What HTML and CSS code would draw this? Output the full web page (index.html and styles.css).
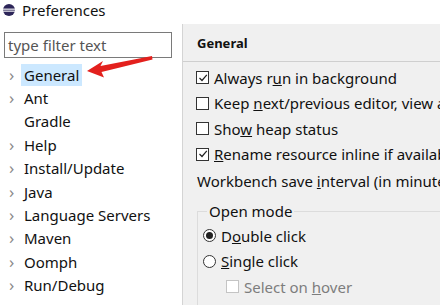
FILE: index.html
```html
<!DOCTYPE html>
<html lang="en">
<head>
  <meta charset="UTF-8" />
  <title>Preferences</title>
  <link rel="stylesheet" href="styles.css">
</head>
<body>
  <div class="titlebar">
    <svg class="logo" width="14" height="14" viewBox="0 0 14 14">
      <circle cx="7" cy="7" r="6" fill="#2c2558"/>
      <rect x="1" y="5.6" width="12" height="1.1" fill="#fff"/>
      <rect x="1" y="7.6" width="12" height="1.1" fill="#fff"/>
    </svg>
    <span class="title">Preferences</span>
  </div>

  <div class="main">
    <div class="sidebar">
      <div class="filter">type filter text</div>
      <div class="tree">
        <div class="node"><span class="chev">›</span><span class="label selected">General</span></div>
        <div class="node"><span class="chev">›</span><span class="label">Ant</span></div>
        <div class="node"><span class="chev"></span><span class="label">Gradle</span></div>
        <div class="node"><span class="chev">›</span><span class="label">Help</span></div>
        <div class="node"><span class="chev">›</span><span class="label">Install/Update</span></div>
        <div class="node"><span class="chev">›</span><span class="label">Java</span></div>
        <div class="node"><span class="chev">›</span><span class="label">Language Servers</span></div>
        <div class="node"><span class="chev">›</span><span class="label">Maven</span></div>
        <div class="node"><span class="chev">›</span><span class="label">Oomph</span></div>
        <div class="node"><span class="chev">›</span><span class="label">Run/Debug</span></div>
        <div class="node"><span class="chev">›</span><span class="label">Team</span></div>
      </div>
      <svg class="arrow" width="80" height="30" viewBox="80 52 80 30">
        <polygon points="87,71 103,61 100.5,66 152,56 152.5,59.5 101.5,72 104,77.5" fill="#e3201d"/>
      </svg>
    </div>

    <div class="content">
      <div class="page-head">General</div>
      <div class="page-body">
        <div class="opt"><span class="box"><svg width="10" height="10" viewBox="0 0 10 10"><path d="M1.5 5 L4 7.5 L8.8 1.8" fill="none" stroke="#222" stroke-width="1.2"/></svg></span><span>Always r<u>u</u>n in background</span></div>
        <div class="opt"><span class="box"></span><span>Keep <u>n</u>ext/previous editor, view and perspective dialogs</span></div>
        <div class="opt"><span class="box"></span><span>Sho<u>w</u> heap status</span></div>
        <div class="opt"><span class="box"><svg width="10" height="10" viewBox="0 0 10 10"><path d="M1.5 5 L4 7.5 L8.8 1.8" fill="none" stroke="#222" stroke-width="1.2"/></svg></span><span><u>R</u>ename resource inline if available</span></div>
        <div class="opt plain"><span>Workbench save <u>i</u>nterval (in minutes):</span></div>

        <fieldset class="group">
          <legend>Open mode</legend>
          <div class="opt"><span class="radio on"></span><span>D<u>o</u>uble click</span></div>
          <div class="opt"><span class="radio"></span><span><u>S</u>ingle click</span></div>
          <div class="opt sub disabled"><span class="box"></span><span>Select on <u>h</u>over</span></div>
          <div class="opt sub disabled"><span class="box"></span><span>Open when using arrow <u>k</u>eys</span></div>
        </fieldset>
      </div>
    </div>
  </div>
</body>
</html>
```

FILE: styles.css
```css
* { box-sizing: border-box; margin: 0; padding: 0; }
html, body {
  width: 440px;
  height: 305px;
  overflow: hidden;
}
body {
  font-family: 'Noto Sans', 'Open Sans', sans-serif;
  font-size: 15px;
  color: #111;
  background: #fff;
}

.titlebar {
  height: 24px;
  display: flex;
  align-items: flex-start;
  padding: 1px 0 0 2px;
  background: #fff;
}

.logo {
  margin: 2px 6px 0 0;
}

.title {
  font-size: 15px;
  line-height: 18px;
  color: #111;
}

.main {
  display: flex;
  height: 281px;
}

.sidebar {
  position: relative;
  width: 183px;
  flex-shrink: 0;
  background: #fff;
  border-right: 1px solid #d4d4d4;
  padding-top: 8px;
}

.filter {
  margin-left: 4px;
  width: 168px;
  height: 26px;
  border: 1px solid #7a7a7a;
  padding: 0 3px;
  line-height: 24px;
  color: #555;
}

.tree {
  margin-top: 5px;
}

.node {
  display: flex;
  align-items: center;
  height: 23.4px;
}

.chev {
  width: 21px;
  padding-left: 9px;
  color: #8a8a8a;
  font-size: 17px;
  line-height: 20px;
}

.label {
  padding: 0 3px;
  line-height: 22px;
}

.label.selected {
  background: #cce8ff;
}

.arrow {
  position: absolute;
  left: 80px;
  top: 28px;
}

.content {
  flex: 1;
  background: #f0f0f0;
  white-space: nowrap;
  overflow: hidden;
}

.page-head {
  height: 38px;
  line-height: 38px;
  padding-left: 14px;
  font-size: 13px;
  font-weight: bold;
  border-bottom: 1px solid #cfcfcf;
}

.page-body {
  padding: 3px 0 0 13px;
}

.opt {
  display: flex;
  align-items: center;
  height: 25.5px;
}

.opt.plain {
  height: 28px;
  padding-left: 1px;
}

.box {
  width: 13px;
  height: 13px;
  border: 1px solid #333;
  background: #fff;
  margin-right: 5px;
  display: flex;
  align-items: center;
  justify-content: center;
  flex-shrink: 0;
}

.radio {
  width: 13px;
  height: 13px;
  border: 1px solid #333;
  border-radius: 50%;
  background: #fff;
  margin-right: 5px;
  display: flex;
  align-items: center;
  justify-content: center;
  flex-shrink: 0;
}

.radio.on::after {
  content: "";
  width: 7px;
  height: 7px;
  border-radius: 50%;
  background: #222;
}

.group {
  margin-top: 7px;
  margin-left: 1px;
  border: 1px solid #dcdcdc;
  border-right: none;
  padding: 0 0 0 5px;
}

.group legend {
  padding: 0 2px;
  margin-left: 4px;
  line-height: 18px;
}

.group .opt:first-of-type {
  margin-top: 3px;
}

.opt.sub {
  padding-left: 23px;
}

.disabled {
  color: #7d7d7d;
}

.disabled .box {
  border-color: #c4c4c4;
}
```
